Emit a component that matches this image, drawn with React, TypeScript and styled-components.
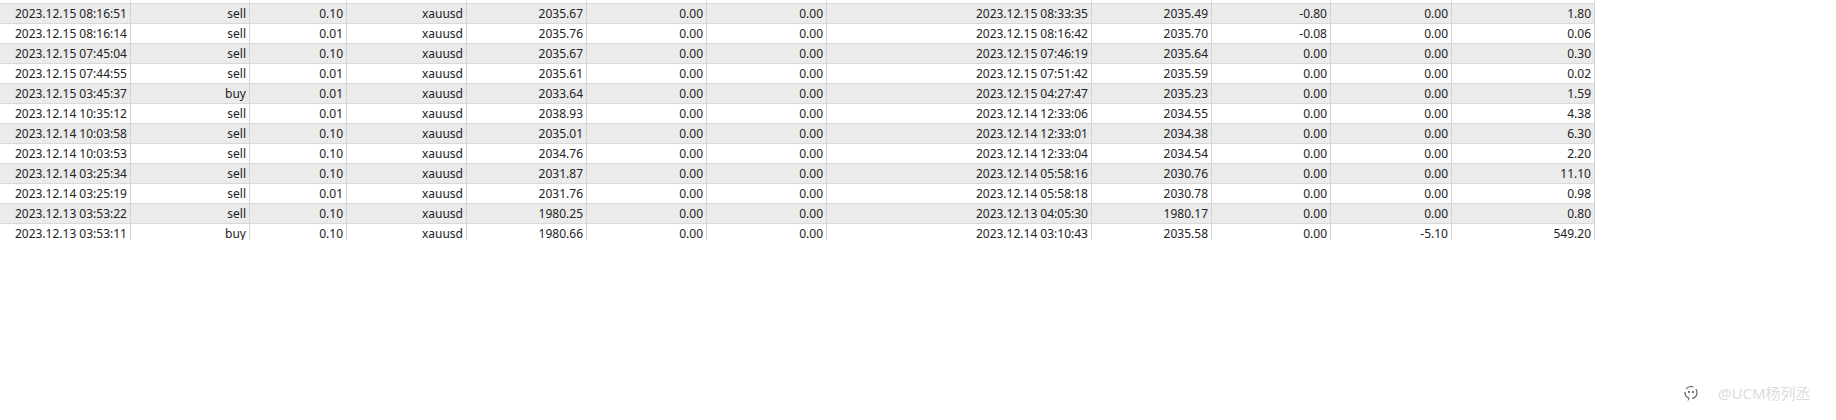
import React from "react";
import styled, { createGlobalStyle } from "styled-components";

const Global = createGlobalStyle`
  html, body { margin: 0; padding: 0; background: #ffffff; }
  body { font-family: "Noto Sans", "Open Sans", "Liberation Sans", sans-serif; }
`;

const COLS = "131px 119px 97px 120px 120px 120px 120px 265px 120px 119px 121px 143px";

const Page = styled.div`
  position: relative;
  width: 1836px;
  height: 420px;
  overflow: hidden;
  background: #ffffff;
`;

const Table = styled.div`
  width: 1595px;
  height: 240px;
  overflow: hidden;
  display: flex;
  flex-direction: column;
`;

const HeaderStub = styled.div`
  display: grid;
  grid-template-columns: ${COLS};
  height: 4px;
  flex: none;
  border-bottom: 1px solid #d9d9d9;
  box-sizing: border-box;
`;

const StubCell = styled.div`
  border-right: 1px solid #dcdcdc;
`;

const Row = styled.div<{ $alt: boolean }>`
  display: grid;
  grid-template-columns: ${COLS};
  height: 20px;
  flex: none;
  box-sizing: border-box;
  border-bottom: 1px solid #d9d9d9;
  background: ${(p) => (p.$alt ? "#ebebeb" : "#ffffff")};
`;

const Cell = styled.div`
  box-sizing: border-box;
  border-right: 1px solid #d4d4d4;
  padding: 0 3px 0 2px;
  font-size: 12px;
  line-height: 19px;
  color: #222222;
  text-align: right;
  white-space: nowrap;
  overflow: hidden;
`;

const Watermark = styled.div`
  position: absolute;
  left: 1683px;
  top: 382px;
  display: flex;
  align-items: center;
  gap: 19px;
  color: #dcdcdc;
  font-size: 15px;
  font-family: "Noto Sans", "Noto Sans CJK SC", sans-serif;
`;

const rows: string[][] = [
  ["2023.12.15 08:16:51", "sell", "0.10", "xauusd", "2035.67", "0.00", "0.00", "2023.12.15 08:33:35", "2035.49", "-0.80", "0.00", "1.80"],
  ["2023.12.15 08:16:14", "sell", "0.01", "xauusd", "2035.76", "0.00", "0.00", "2023.12.15 08:16:42", "2035.70", "-0.08", "0.00", "0.06"],
  ["2023.12.15 07:45:04", "sell", "0.10", "xauusd", "2035.67", "0.00", "0.00", "2023.12.15 07:46:19", "2035.64", "0.00", "0.00", "0.30"],
  ["2023.12.15 07:44:55", "sell", "0.01", "xauusd", "2035.61", "0.00", "0.00", "2023.12.15 07:51:42", "2035.59", "0.00", "0.00", "0.02"],
  ["2023.12.15 03:45:37", "buy", "0.01", "xauusd", "2033.64", "0.00", "0.00", "2023.12.15 04:27:47", "2035.23", "0.00", "0.00", "1.59"],
  ["2023.12.14 10:35:12", "sell", "0.01", "xauusd", "2038.93", "0.00", "0.00", "2023.12.14 12:33:06", "2034.55", "0.00", "0.00", "4.38"],
  ["2023.12.14 10:03:58", "sell", "0.10", "xauusd", "2035.01", "0.00", "0.00", "2023.12.14 12:33:01", "2034.38", "0.00", "0.00", "6.30"],
  ["2023.12.14 10:03:53", "sell", "0.10", "xauusd", "2034.76", "0.00", "0.00", "2023.12.14 12:33:04", "2034.54", "0.00", "0.00", "2.20"],
  ["2023.12.14 03:25:34", "sell", "0.10", "xauusd", "2031.87", "0.00", "0.00", "2023.12.14 05:58:16", "2030.76", "0.00", "0.00", "11.10"],
  ["2023.12.14 03:25:19", "sell", "0.01", "xauusd", "2031.76", "0.00", "0.00", "2023.12.14 05:58:18", "2030.78", "0.00", "0.00", "0.98"],
  ["2023.12.13 03:53:22", "sell", "0.10", "xauusd", "1980.25", "0.00", "0.00", "2023.12.13 04:05:30", "1980.17", "0.00", "0.00", "0.80"],
  ["2023.12.13 03:53:11", "buy", "0.10", "xauusd", "1980.66", "0.00", "0.00", "2023.12.14 03:10:43", "2035.58", "0.00", "-5.10", "549.20"],
];

const ChatIcon = () => (
  <svg width="16" height="16" viewBox="0 0 16 16" fill="none">
    <circle cx="8" cy="7.5" r="6" stroke="#555" strokeWidth="1.1" strokeDasharray="8 3" />
    <circle cx="6" cy="7" r="0.9" fill="#333" />
    <circle cx="10" cy="7" r="0.9" fill="#333" />
    <path d="M6 13.5 L5 15.5" stroke="#555" strokeWidth="1" />
  </svg>
);

export default function App() {
  return (
    <Page>
      <Global />
      <Table>
        <HeaderStub>
          {Array.from({ length: 12 }).map((_, i) => (
            <StubCell key={i} />
          ))}
        </HeaderStub>
        {rows.map((r, i) => (
          <Row key={i} $alt={i % 2 === 0}>
            {r.map((c, j) => (
              <Cell key={j}>{c}</Cell>
            ))}
          </Row>
        ))}
      </Table>
      <Watermark>
        <ChatIcon />
        <span>@UCM杨列丞</span>
      </Watermark>
    </Page>
  );
}
